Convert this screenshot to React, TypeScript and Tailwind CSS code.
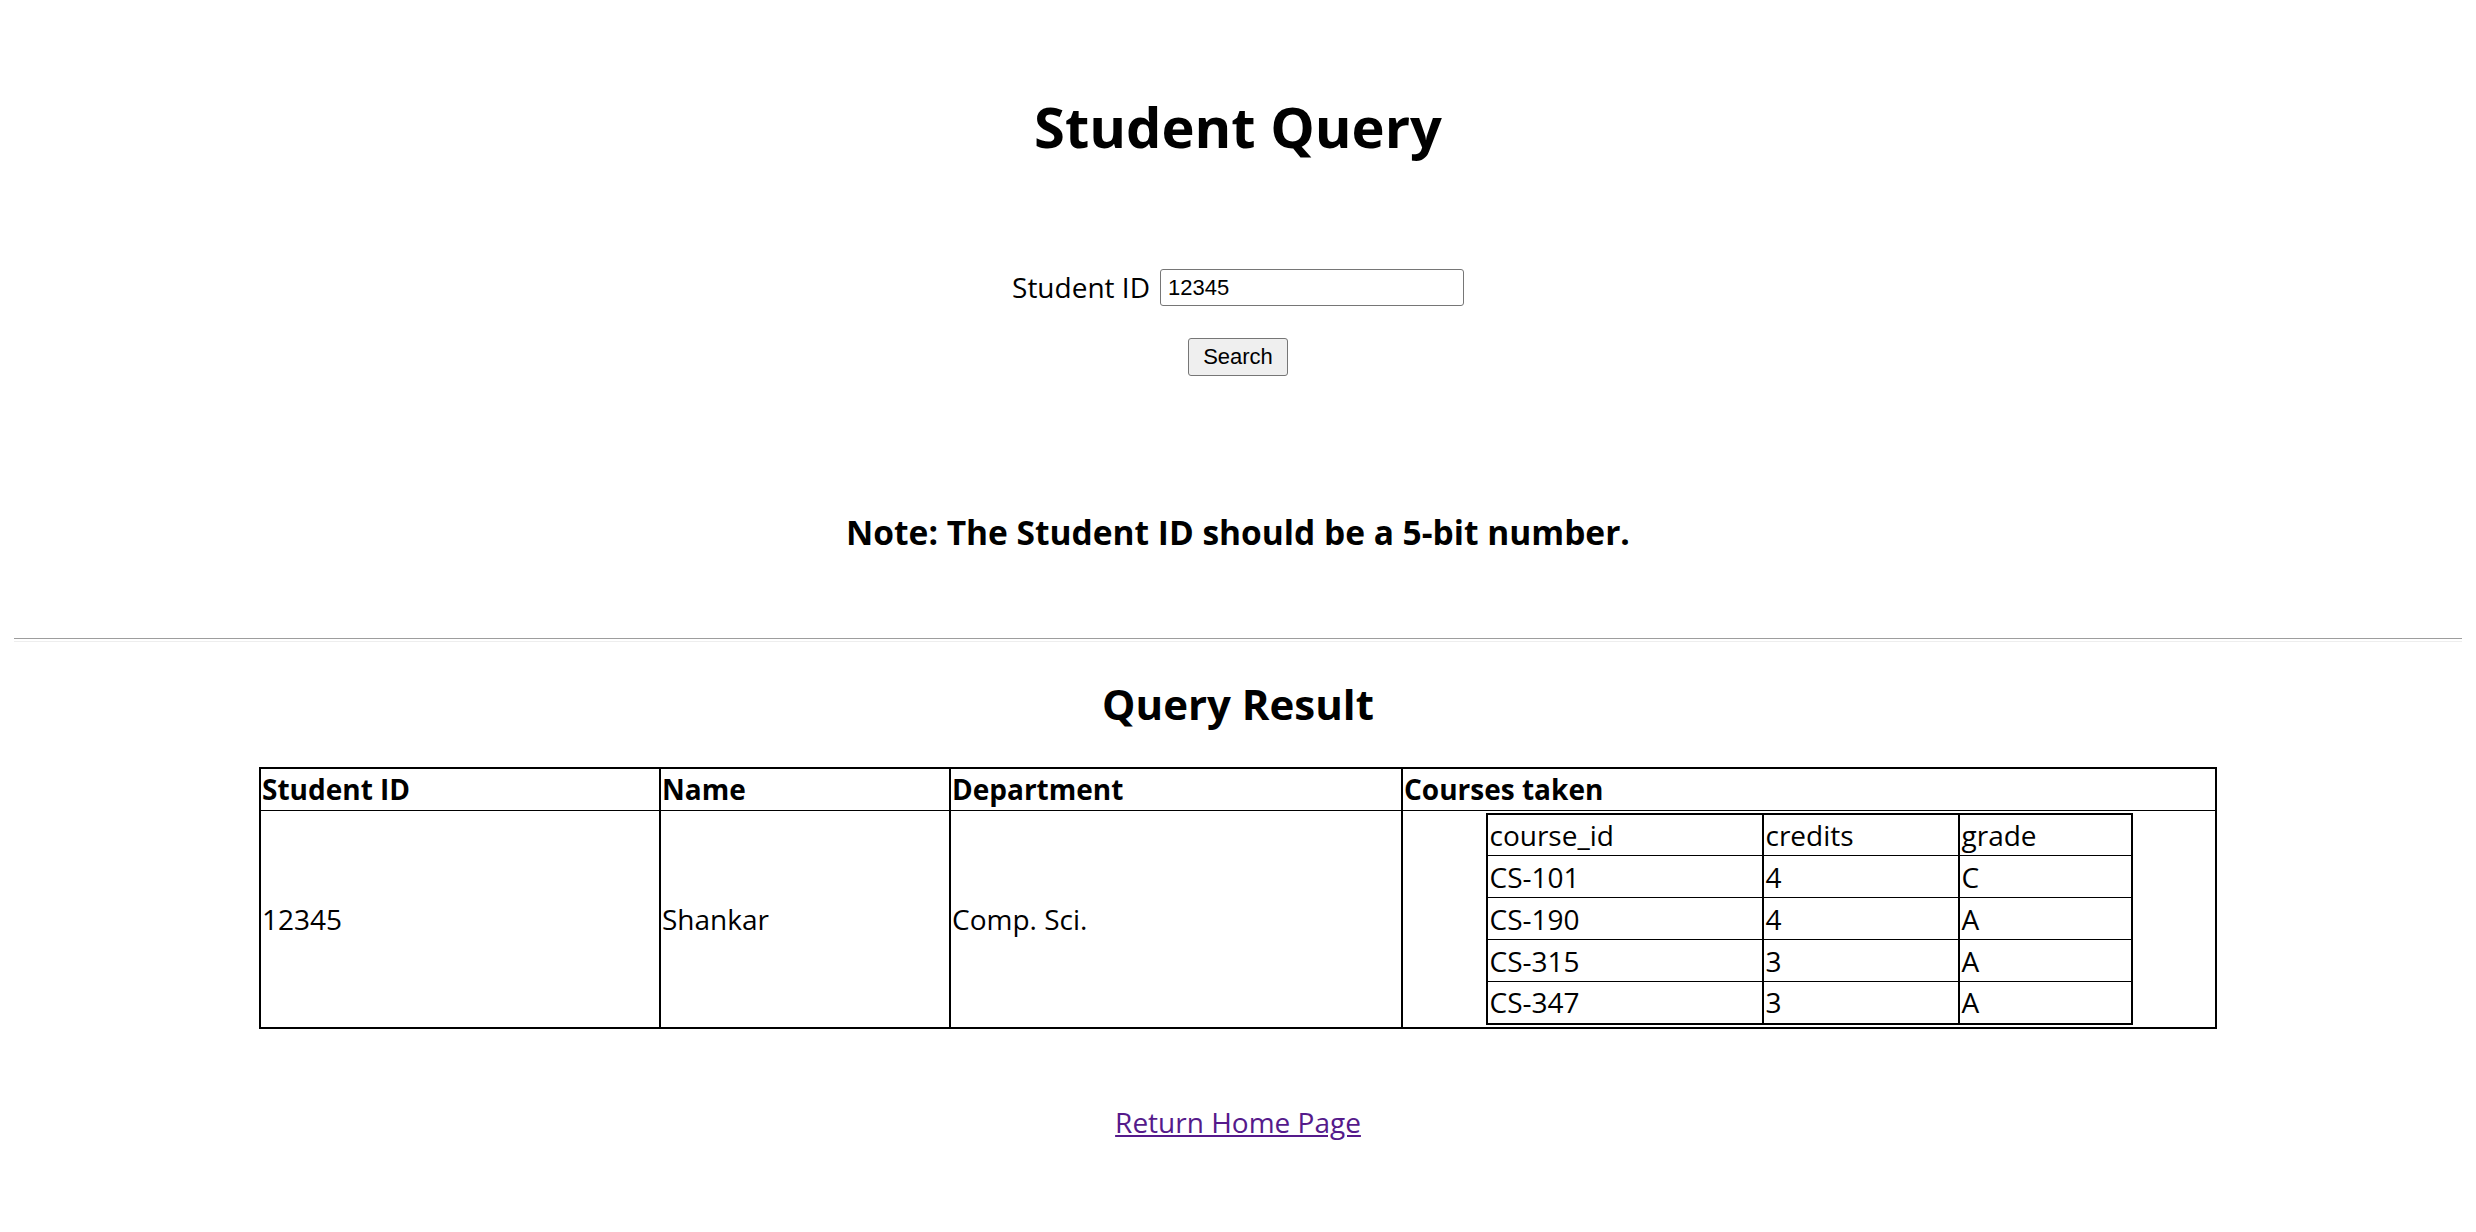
const courses = [
  { id: "CS-101", credits: "4", grade: "C" },
  { id: "CS-190", credits: "4", grade: "A" },
  { id: "CS-315", credits: "3", grade: "A" },
  { id: "CS-347", credits: "3", grade: "A" },
];

const App = () => {
  return (
    <div className="min-h-screen bg-white px-[14px] text-black font-['Open_Sans',sans-serif]">
      <h1 className="pt-[91px] text-center text-[56px] font-bold leading-[70px]">Student Query</h1>

      <form className="flex flex-col items-center" onSubmit={(e) => e.preventDefault()}>
        <div className="mt-[108px] flex h-[37px] items-center gap-[10px]">
          <label className="text-[28px] leading-[37px]">Student ID</label>
          <input
            defaultValue="12345"
            className="h-[37px] w-[304px] rounded-[3px] border border-[#767676] px-[7px] font-['Liberation_Sans',Arial,sans-serif] text-[22px] outline-none"
          />
        </div>
        <button
          type="submit"
          className="mt-[32px] h-[38px] w-[100px] rounded-[3px] border border-[#767676] bg-[#efefef] font-['Liberation_Sans',Arial,sans-serif] text-[22px] leading-none"
        >
          Search
        </button>
      </form>

      <h3 className="mt-[132px] text-center text-[33.5px] font-bold leading-[48px]">
        Note: The Student ID should be a 5-bit number.
      </h3>

      <div className="mt-[82px] h-[4px] border-t border-b border-t-[#9d9d9d] border-b-[#eeeeee]" />

      <h2 className="mt-[40px] text-center text-[42px] font-bold leading-[44px]">Query Result</h2>

      <table className="mx-auto mt-[41px] w-[1958px] border-collapse border-2 border-black text-[28px] leading-[38px]">
        <thead>
          <tr className="h-[42px]">
            <th className="w-[400px] border-x-2 border-y border-black px-[1px] text-left font-bold">Student ID</th>
            <th className="w-[290px] border-x-2 border-y border-black px-[1px] text-left font-bold">Name</th>
            <th className="w-[452px] border-x-2 border-y border-black px-[1px] text-left font-bold">Department</th>
            <th className="border-x-2 border-y border-black px-[1px] text-left font-bold">Courses taken</th>
          </tr>
        </thead>
        <tbody>
          <tr className="h-[217px]">
            <td className="border-x-2 border-y border-black px-[1px]">12345</td>
            <td className="border-x-2 border-y border-black px-[1px]">Shankar</td>
            <td className="border-x-2 border-y border-black px-[1px]">Comp. Sci.</td>
            <td className="border-x-2 border-y border-black p-0 py-[2px]">
              <table className="mx-auto w-[647px] border-collapse border-2 border-black">
                <tbody>
                  <tr className="h-[42px]">
                    <td className="w-[276px] border-x-2 border-y border-black px-[2px]">course_id</td>
                    <td className="w-[196px] border-x-2 border-y border-black px-[2px]">credits</td>
                    <td className="border-x-2 border-y border-black px-[2px]">grade</td>
                  </tr>
                  {courses.map((c) => (
                    <tr key={c.id} className="h-[42px]">
                      <td className="border-x-2 border-y border-black px-[2px]">{c.id}</td>
                      <td className="border-x-2 border-y border-black px-[2px]">{c.credits}</td>
                      <td className="border-x-2 border-y border-black px-[2px]">{c.grade}</td>
                    </tr>
                  ))}
                </tbody>
              </table>
            </td>
          </tr>
        </tbody>
      </table>

      <div className="mt-[73px] pb-[60px] text-center text-[28px] leading-[40px]">
        <a href="#" className="text-[#551a8b] underline">Return Home Page</a>
      </div>
    </div>
  );
};

export default App;
